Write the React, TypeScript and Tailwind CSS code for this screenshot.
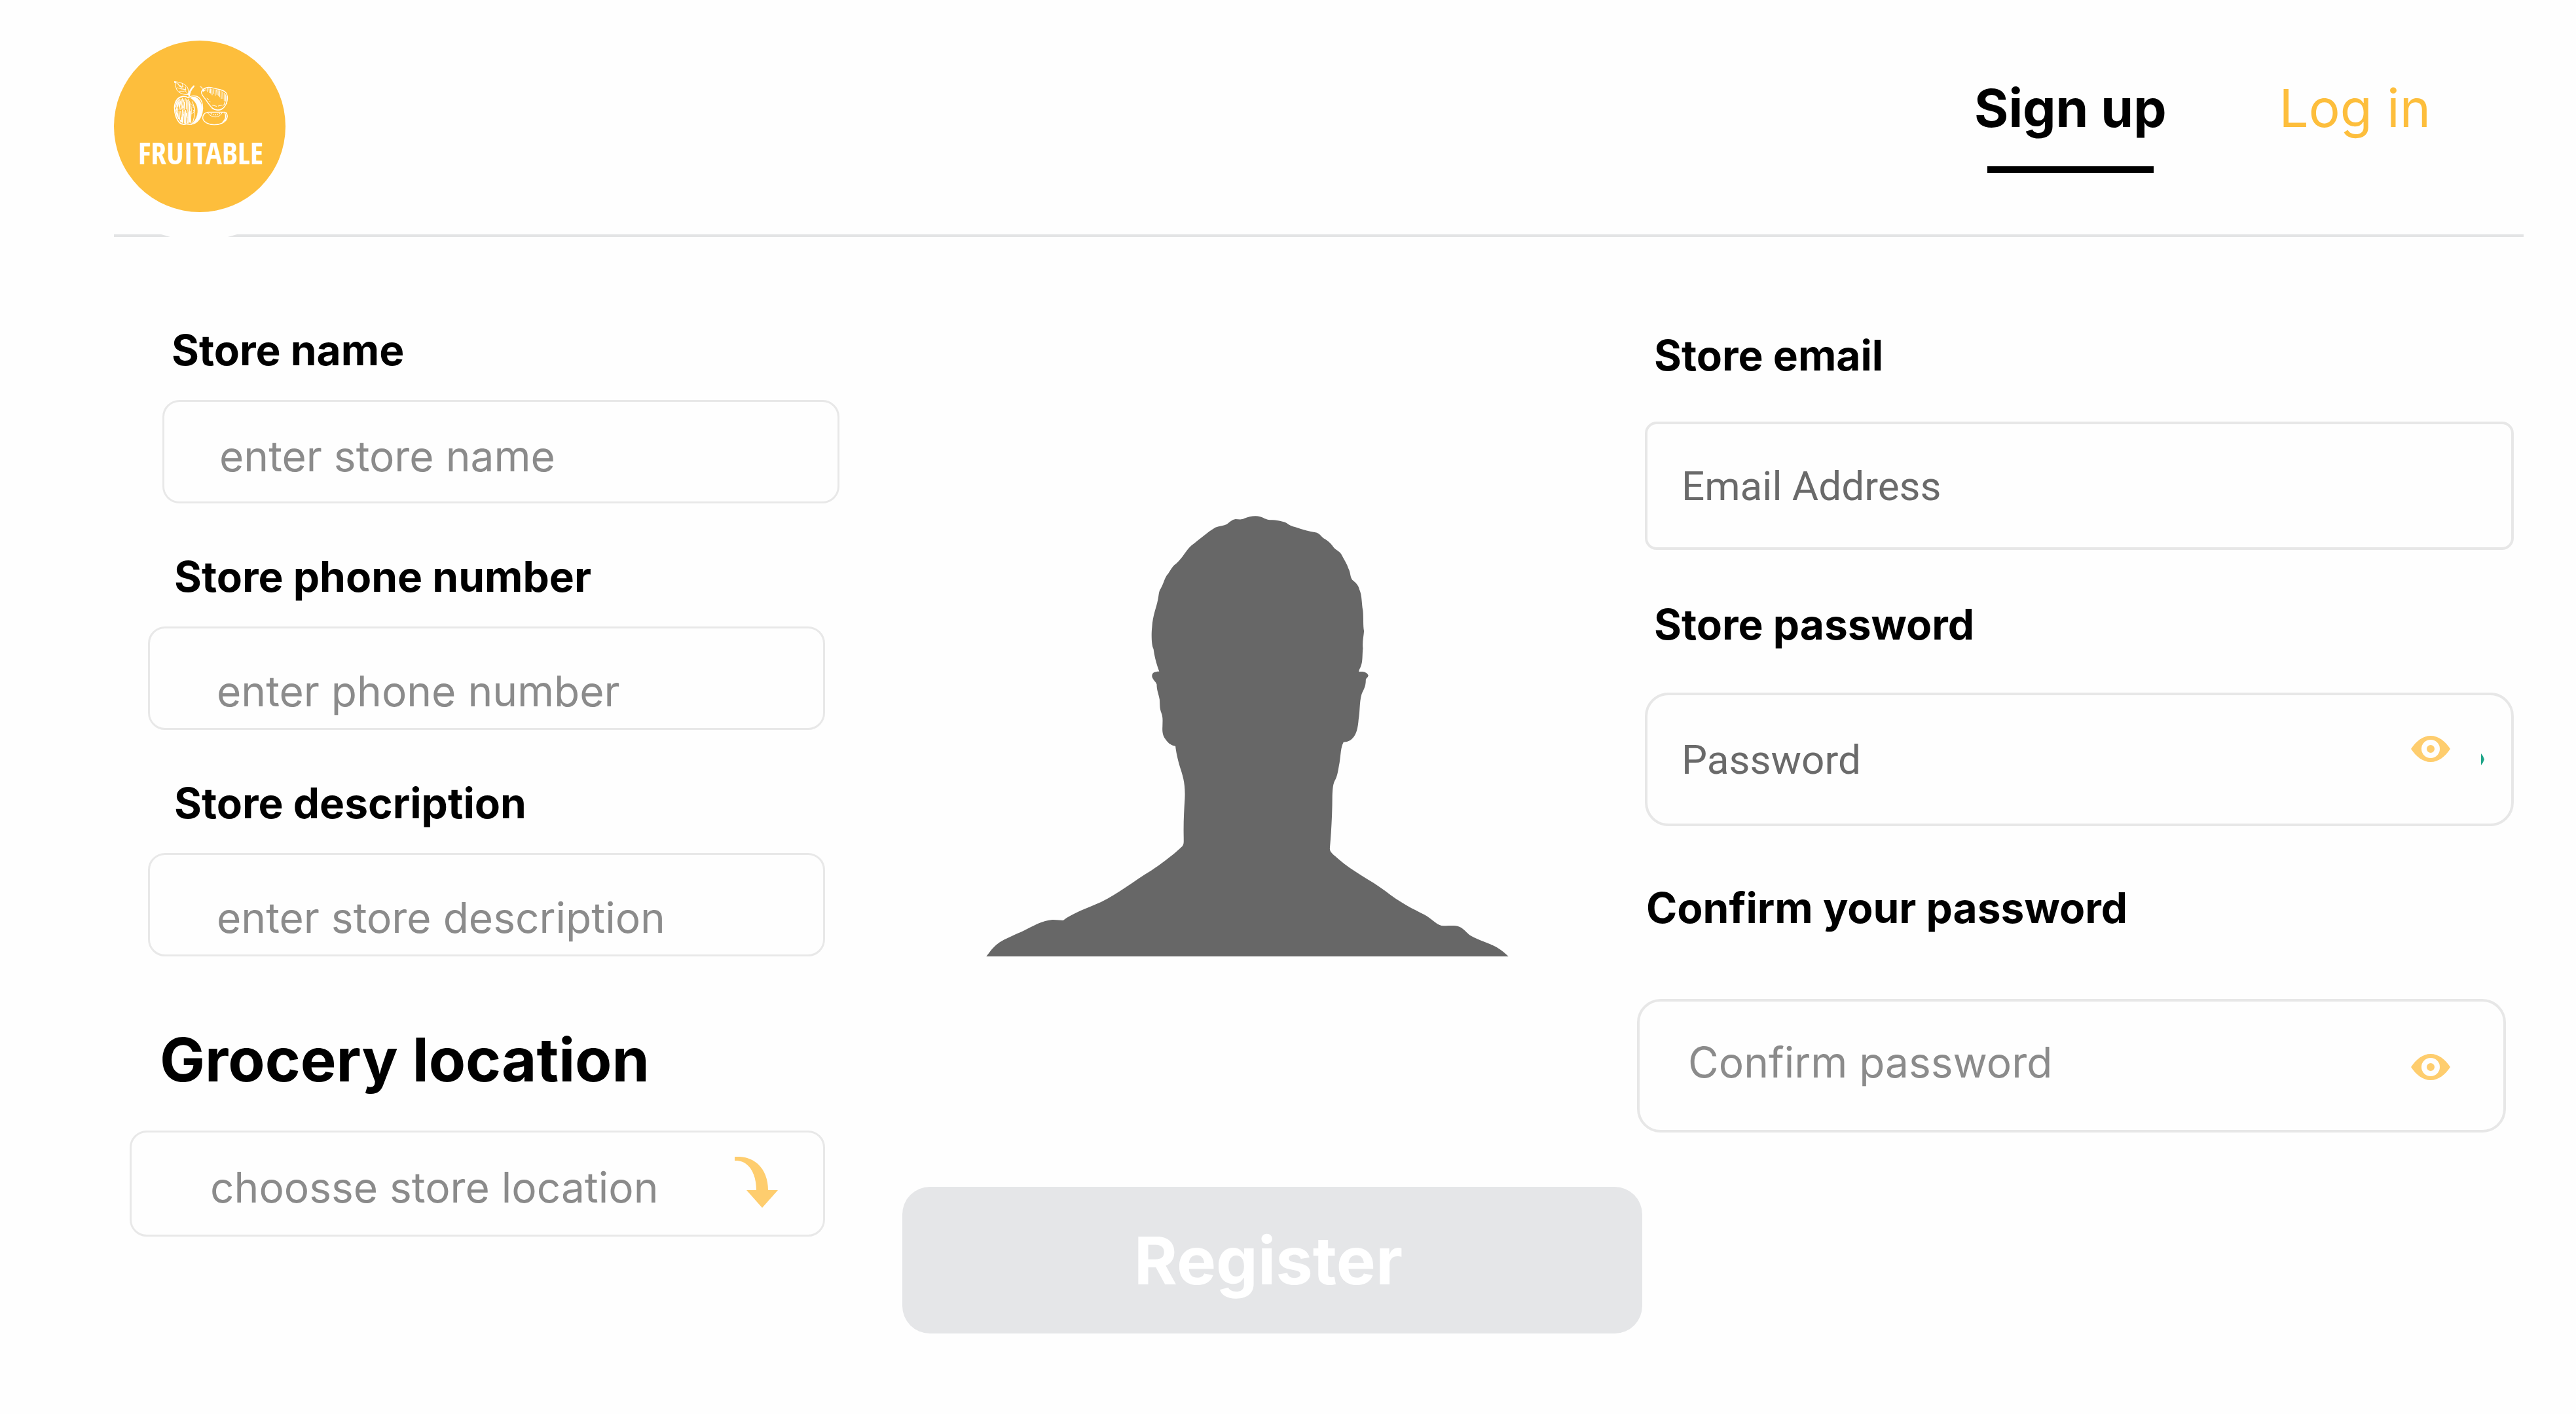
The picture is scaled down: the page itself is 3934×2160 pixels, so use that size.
import type { ReactNode } from "react";

const LABEL = "block text-[64px] leading-[80px] font-bold text-black";
const BOX =
  "block w-full bg-transparent outline-none text-[64px] placeholder:text-[#8b8b8b] placeholder:opacity-100";

function Logo() {
  return (
    <svg viewBox="72 66 786 786" className="size-[262px]" role="img" aria-label="Fruitable">
      <circle cx="465" cy="459" r="393" fill="#fdbe3c" />
      <g fill="none" stroke="#fff" strokeWidth="3" strokeLinecap="round" strokeLinejoin="round">
        {/* leaf and stem */}
        <path d="M350 254c24 2 48 10 58 25 7 12 4 24 5 34-22 2-44-6-53-22-7-13-4-24-10-37z" />
        <path d="M352 256c20 14 44 32 60 58M366 263l6 14 18 1M376 272l6 16 19 2M363 282l18 6M372 298l22 0M386 266l0 10M400 278l1 16" strokeWidth="2.5" />
        <path d="M415 322c-1-20 8-36 23-49M418 320c2-18 9-32 21-44" strokeWidth="4" />
        <circle cx="353" cy="258" r="3" fill="#fff" />
        {/* apple */}
        <path d="M413 328c-14-9-36-9-50 6-19 22-15 57-6 82 7 19 18 33 33 34 8 1 12-3 18-2 7 1 12 4 20 1" strokeWidth="5" />
        <path d="M413 328c14-12 36-12 49 0 17 16 20 44 14 69-7 28-26 51-48 52" strokeWidth="4" />
        <path d="M428 332c20 14 30 36 28 62-2 24-14 42-27 54 28-8 42-28 46-56 4-30-8-56-30-67-9-2-16 0-22 3z" fill="#fff" strokeWidth="2" />
        <path d="M412 334c12 20 17 40 14 62-1 20-4 36 0 50M430 346c14 24 16 62 2 98" />
        <path d="M428 360c9 2 13 10 13 20s-4 18-12 20M432 370l4 3M434 384l3 2" />
        <path
          d="M361 343l-6 28M367 338l-9 46M374 334l-12 38M380 336l-10 46M386 332l-8 50M392 338l-8 40M399 332l-6 52M405 336l-2 44M411 340l0 48M356 384l5 28M363 378l4 42M370 388l4 42M378 390l4 48M386 384l2 56M393 392l2 52M400 386l1 60M407 388l1 56M414 392l-2 52M419 366l-1 74M383 420l4 24M372 424l8 16M360 400l8 24M417 350l3 30"
          strokeWidth="4"
        />
        <path d="M424 390l-1 50M376 346l-6 20M396 350l-4 24M403 400l4 20M390 404l-4 20" strokeWidth="5" />
        {/* pear */}
        <path d="M482 294c-4-7-9-12-15-18M485 291c-5-6-8-9-15-14" strokeWidth="2.5" />
        <path d="M484 288c12-12 28-9 44-4 24 6 46 6 58 22 12 18 6 48-10 66-14 16-36 16-52 4-16-14-26-34-38-48-8-9-14-16-13-26 1-7 5-11 11-14z" strokeWidth="4" />
        <circle cx="482" cy="294" r="5" fill="#fff" strokeWidth="2" />
        <path d="M493 284l1 12M500 284l1 17M507 285l2 20M514 287l1 20M521 289l1 26M528 290l2 20M535 291l1 27M542 292l2 22M549 294l1 24M556 296l1 28M563 298l1 34M570 302l1 30M577 307l0 34M584 314l0 30M589 322l-1 34M580 346l-2 14M510 346l3 1M504 334l2 2M522 362l20 5M550 366l16-4M498 330l6 7M570 366l12-14" />
        <path d="M522 376c14 10 34 11 46 2" strokeWidth="4" />
        {/* slice */}
        <path d="M502 394h78c11 3 13 18 10 28-5 18-30 30-58 30-26 0-50-12-53-30-1-12 6-26 23-28z" strokeWidth="4" />
        <path d="M501 396c8 12 20 20 36 20s26-10 31-20" />
        <path d="M580 398c8 14 3 32-10 42l14-12c8-10 8-22 2-32" strokeWidth="4" />
        <path d="M517 401l2 1M527 404l0 2M537 404l0 3M547 403l-1 2M556 401l-2 1" strokeWidth="4" />
      </g>
      <text
        x="470"
        y="633"
        textAnchor="middle"
        fill="#fff"
        fontSize="142"
        fontWeight="700"
        fontFamily="'Open Sans Condensed', 'Roboto Condensed', sans-serif"
      >
        FRUITABLE
      </text>
    </svg>
  );
}

function Silhouette() {
  return (
    <svg viewBox="0 0 796 673" className="w-[67%] shrink-0" role="img" aria-label="Store photo placeholder">
      <path
        transform="scale(0.5487 0.4592) translate(-51 -58)"
        fill="#676767"
        d="M51 1524C62 1508 70 1490 92 1474C118 1456 145 1445 165 1432C190 1417 208 1405 232 1402C245 1401 256 1404 265 1404C290 1380 330 1364 370 1343C420 1314 462 1272 510 1238C545 1210 575 1182 594 1160C601 1152 600 1145 600 1130C599 1080 601 1040 603 1000C605 950 598 925 590 896C583 868 579 846 577 825C566 822 560 818 553 808C542 792 540 780 541 760C541 745 543 730 538 715C533 700 534 690 533 670C530 650 525 640 525 620C522 610 514 605 512 594C511 582 518 577 532 577C525 555 519 530 516 502C510 490 510 450 512 430C514 390 524 365 528 340C531 325 530 312 536 302C545 285 546 265 557 252C564 240 568 228 580 218C598 198 606 175 622 158C645 138 665 115 688 99C700 94 712 93 720 88C728 80 734 73 744 71C752 71 760 74 768 69C782 62 800 58 812 63C822 66 828 73 840 74C858 74 874 78 886 84C892 90 900 95 912 98C930 106 950 112 966 115C978 118 980 126 988 134C1000 142 1010 152 1016 164C1022 174 1034 178 1038 188C1046 206 1054 220 1058 236C1064 250 1062 262 1068 272C1076 280 1086 290 1088 304C1096 325 1094 350 1098 375C1100 400 1098 425 1101 443C1100 460 1096 480 1098 500C1096 520 1098 545 1092 560C1090 568 1086 572 1087 578C1098 577 1108 578 1113 590C1112 598 1106 598 1106 606C1106 630 1098 640 1094 654C1088 680 1090 710 1086 735C1084 765 1080 785 1070 798C1062 810 1052 811 1044 812C1036 830 1037 850 1033 880C1029 905 1028 920 1022 935C1014 950 1014 970 1013 990C1013 1050 1010 1110 1006 1165C1006 1180 1020 1188 1030 1200C1070 1242 1120 1270 1160 1306C1200 1344 1240 1368 1268 1384C1288 1396 1300 1416 1316 1421C1334 1424 1350 1418 1366 1425C1380 1432 1386 1446 1398 1455C1420 1470 1450 1480 1468 1492C1484 1503 1494 1514 1503 1524Z"
      />
    </svg>
  );
}

function Eye() {
  return (
    <svg viewBox="0 0 60 40" className="h-10 w-[60px]" aria-hidden="true">
      <path
        fill="#fecd6e"
        fillRule="evenodd"
        d="M0 20C8 8 18 0 30 0s22 8 30 20c-8 12-18 20-30 20S8 32 0 20zM30 6a14 14 0 1 0 0 28a14 14 0 1 0 0-28zM30 14a6 6 0 1 1 0 12a6 6 0 1 1 0-12z"
      />
    </svg>
  );
}

function Field({ id, label, className, children }: { id: string; label: string; className: string; children: ReactNode }) {
  return (
    <div className={className}>
      <label htmlFor={id} className={LABEL}>
        {label}
      </label>
      {children}
    </div>
  );
}

export default function App() {
  return (
    <div className="min-h-screen bg-[#fefefe] font-['Inter',sans-serif]">
      <header className="relative ml-[174px] mr-20 flex items-start justify-between border-b-4 border-[#e3e4e5] pt-[62px] pb-[34px]">
        <a href="#home">
          <Logo />
        </a>
        <nav className="flex gap-[172px] pt-[63px] pr-[142px] text-[80px] leading-[80px]">
          <a href="#signup" className="flex flex-col items-center gap-[49px] font-bold text-black">
            Sign up
            <span className="h-2.5 w-[254px] bg-black" />
          </a>
          <a href="#login" className="text-[#fdbe3c]">
            Log in
          </a>
        </nav>
        <svg viewBox="0 0 116 4" className="absolute top-full left-[72px] h-1 w-[116px]" aria-hidden="true">
          <path d="M0 0H116L102 4H14Z" fill="#fefefe" />
        </svg>
      </header>

      <form className="grid grid-cols-[1084fr_1218fr_1339fr] items-start pt-[133px] pr-[95px] pl-[198px]">
        <div className="flex flex-col">
          <Field id="store-name" label="Store name" className="ml-[50px] [&>label]:pl-3.5">
            <input
              id="store-name"
              type="text"
              placeholder="enter store name"
              className={`${BOX} mt-9 h-[158px] rounded-[26px] border-3 border-[#e8e8e8] pt-3 pl-[84px]`}
            />
          </Field>
          <Field id="store-phone" label="Store phone number" className="mt-[72px] mr-[22px] ml-7 [&>label]:pl-10">
            <input
              id="store-phone"
              type="tel"
              placeholder="enter phone number"
              className={`${BOX} mt-9 h-[158px] rounded-[26px] border-3 border-[#e8e8e8] pt-[38px] pl-[102px]`}
            />
          </Field>
          <Field id="store-description" label="Store description" className="mt-[72px] mr-[22px] ml-7 [&>label]:pl-10">
            <input
              id="store-description"
              type="text"
              placeholder="enter store description"
              className={`${BOX} mt-9 h-[158px] rounded-[26px] border-3 border-[#e8e8e8] pt-[38px] pl-[102px]`}
            />
          </Field>
          <div className="mt-[98px] mr-[22px]">
            <label htmlFor="store-location" className="block pl-[46px] text-[92px] leading-[120px] font-bold text-black">
              Grocery location
            </label>
            <div className="relative mt-12">
              <select
                id="store-location"
                defaultValue=""
                className="block h-[162px] w-full appearance-none rounded-[26px] border-3 border-[#e8e8e8] bg-transparent pt-3 pl-[120px] text-[64px] text-[#8b8b8b] outline-none"
              >
                <option value="">choosse store location</option>
              </select>
              <svg viewBox="0 0 66 78" className="pointer-events-none absolute top-10 right-[72px] h-[78px] w-[66px]" aria-hidden="true">
                <path d="M0 0C32-2 51 20 51 51H66L42 78L18 51H33C33 26 22 5 0 6Z" fill="#fecd6e" />
              </svg>
            </div>
          </div>
        </div>

        <div className="pt-[292px]">
          <div className="flex justify-center pl-7">
            <Silhouette />
          </div>
          <div className="mt-[352px] -mr-2 pl-24">
            <button
              type="submit"
              className="block h-56 w-full rounded-[42px] bg-[#e5e6e8] pr-3 text-[101px] leading-none font-bold text-white"
            >
              Register
            </button>
          </div>
        </div>

        <div className="flex flex-col pt-2">
          <Field id="store-email" label="Store email" className="ml-3 [&>label]:pl-3.5">
            <input
              id="store-email"
              type="email"
              placeholder="Email Address"
              className="mt-[61px] block h-[196px] w-full rounded-[18px] border-4 border-[#e7e7e7] bg-transparent pl-[52px] font-['Roboto',sans-serif] text-[62px] outline-none placeholder:text-[#6a6a6a] placeholder:opacity-100"
            />
          </Field>
          <Field id="store-password" label="Store password" className="mt-[74px] ml-3 [&>label]:pl-3.5">
            <div className="relative mt-16">
              <input
                id="store-password"
                type="password"
                placeholder="Password"
                className="block h-[204px] w-full rounded-[36px] border-4 border-[#e7e7e7] bg-transparent pl-[52px] font-['Roboto',sans-serif] text-[62px] outline-none placeholder:text-[#6a6a6a] placeholder:opacity-100"
              />
              <button type="button" aria-label="Show password" className="absolute top-[66px] right-[97px]">
                <Eye />
              </button>
              <svg viewBox="0 0 6 20" className="absolute top-[92px] right-11 h-5 w-1.5" aria-hidden="true">
                <path d="M0 1Q3 4 5 10Q3 16 0 19Z" fill="#1fa588" />
              </svg>
            </div>
          </Field>
          <Field id="confirm-password" label="Confirm your password" className="mt-[85px] mr-3 [&>label]:pl-3.5">
            <div className="relative mt-[99px]">
              <input
                id="confirm-password"
                type="password"
                placeholder="Confirm password"
                className={`${BOX} h-[204px] rounded-[36px] border-4 border-[#e7e7e7] pb-3 pl-[74px]`}
              />
              <button type="button" aria-label="Show confirmed password" className="absolute top-[84px] right-[85px]">
                <Eye />
              </button>
            </div>
          </Field>
        </div>
      </form>
    </div>
  );
}
